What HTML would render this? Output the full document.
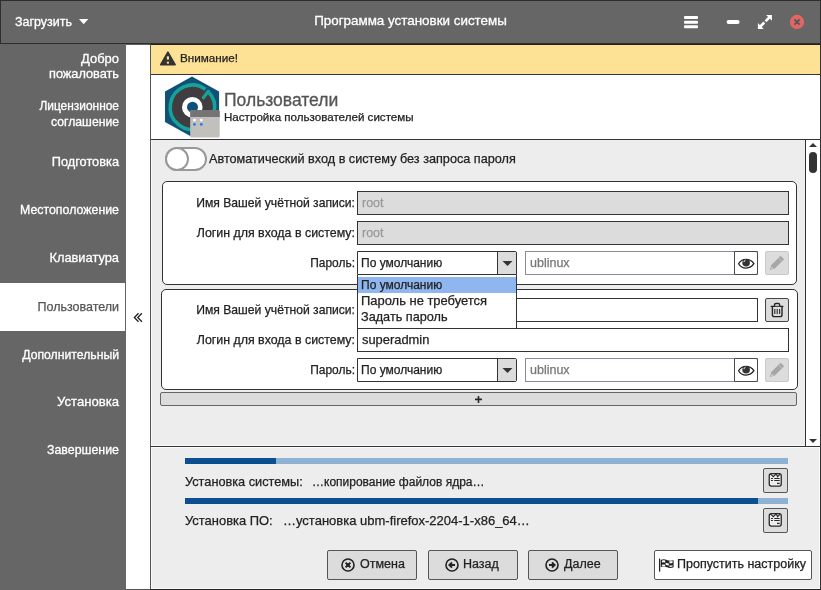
<!DOCTYPE html>
<html><head><meta charset="utf-8">
<style>
*{box-sizing:border-box;margin:0;padding:0}
html,body{width:821px;height:590px;overflow:hidden;background:#ededed}
body{will-change:transform}
body{position:relative;font-family:"Liberation Sans",sans-serif;font-size:12.5px;color:#222}
.a{position:absolute}
.t{position:absolute;white-space:pre;line-height:14px;height:14px;-webkit-text-stroke:0.25px currentColor}
.r{text-align:right}
.w{color:#fff;-webkit-text-stroke:0.3px #fff}
#hdr{left:0;top:0;width:821px;height:44px;background:#666;border:1px solid #2e2e2e}
#side{left:0;top:44px;width:126px;height:546px;background:#666}
#sel{left:0;top:283px;width:125px;height:48px;background:#fff}
#strip{left:126px;top:45px;width:25px;height:545px;background:#fff;border-bottom:1px solid #555}
#content{left:150px;top:44px;width:671px;height:546px;background:#ededed;border-top:1px solid #222;border-left:1px solid #555;border-right:1px solid #333;border-bottom:1px solid #222}
#warn{left:151px;top:45px;width:669px;height:30px;background:#fde295;border-bottom:1px solid #333}
#head{left:151px;top:75px;width:669px;height:65px;background:#fff;border-bottom:1px solid #333}
#scroll{left:151px;top:140px;width:669px;height:307px;border-bottom:1px solid #333}
#scrollhl{left:151px;top:140px;width:654px;height:306px;border-left:1px solid #fafafa;border-bottom:1px solid #fafafa}
#sb{left:805px;top:140px;width:15px;height:306px;background:#fff;border-left:1px solid #333}
.frame{position:absolute;background:#fff;border:1px solid #333;border-radius:5px}
.entry{position:absolute;background:#fff;border:1px solid #333}
.dis{background:#dcdcdc}
.btn{position:absolute;background:#dcdcdc;border:1px solid #555;border-radius:2px}
.pb{position:absolute;height:6px;background:#8fb1d4}
.pbf{position:absolute;left:0;top:0;height:6px;background:#0b4f91}
</style></head><body>
<svg width="0" height="0" style="position:absolute">
<defs>
<symbol id="eye" viewBox="0 0 23 24"><path d="M3.6 12.7C6.8 6.9 15.2 6.9 18.9 12.7C15.2 18.5 6.8 18.5 3.6 12.7Z" fill="none" stroke="#222" stroke-width="1.3"/><circle cx="11.1" cy="11.7" r="3.8" fill="#333"/><path d="M8.9 11.2A2.4 2.4 0 0 1 10.5 9.1" stroke="#fff" stroke-width="0.9" fill="none"/></symbol>
<symbol id="pencil" viewBox="0 0 24 24"><g transform="translate(11.3 12.6) rotate(45)"><path d="M-2.5 -8.6H2.5V4.6L0 9.2L-2.5 4.6Z" fill="#a6a6a6"/><path d="M-2.6 -5.6H2.6" stroke="#d0d0d0" stroke-width="0.7"/><path d="M-1.2 5.2H1.2L0 7.6Z" fill="#d4d4d4"/></g></symbol>
<symbol id="trash" viewBox="0 0 24 24"><path d="M6.2 8.4H17.8" stroke="#222" stroke-width="1.4" stroke-linecap="round"/><path d="M9.5 8.2V6.9Q9.5 5.3 11.1 5.3H13.1Q14.7 5.3 14.7 6.9V8.2" fill="#bbb" stroke="#222" stroke-width="1.3"/><path d="M7.4 8.6V16.7Q7.4 18.6 9.3 18.6H15.1Q17 18.6 17 16.7V8.6" fill="none" stroke="#222" stroke-width="1.4"/><path d="M9.8 11V16.1M12.2 11V16.1M14.6 11V16.1" stroke="#333" stroke-width="1.15"/></symbol>
<symbol id="log" viewBox="0 0 25 25"><rect x="6.25" y="5.65" width="12" height="12.4" rx="2" fill="#eee" stroke="#2a2a2a" stroke-width="1.3"/><path d="M7.4 5.8L10.3 8.7L13.1 5.8L14.6 8.7L17.2 5.8" fill="none" stroke="#2a2a2a" stroke-width="1.2"/><path d="M8 10.5H9.9M11.2 10.5H16.7M8 12.5H9.9M11.2 12.5H16.7M14 15.3H16.7" stroke="#2a2a2a" stroke-width="1.15"/></symbol>
<symbol id="cancel" viewBox="0 0 16 16"><circle cx="8" cy="8" r="6" fill="none" stroke="#222" stroke-width="1.6"/><path d="M5.6 5.6L10.4 10.4M10.4 5.6L5.6 10.4" stroke="#222" stroke-width="1.9"/><rect x="6.4" y="6.4" width="3.2" height="3.2" fill="#222"/></symbol>
<symbol id="back" viewBox="0 0 16 16"><circle cx="8" cy="8" r="6" fill="none" stroke="#222" stroke-width="1.6"/><path d="M11 8H6M8 5.3L5.3 8L8 10.7" fill="none" stroke="#222" stroke-width="1.8"/></symbol>
<symbol id="fwd" viewBox="0 0 16 16"><circle cx="8" cy="8" r="6" fill="none" stroke="#222" stroke-width="1.6"/><path d="M5 8H10M8 5.3L10.7 8L8 10.7" fill="none" stroke="#222" stroke-width="1.8"/></symbol>
<symbol id="flag" viewBox="0 0 16 16"><path d="M1.6 2.6V15.6" stroke="#222" stroke-width="1.3"/><path d="M2.8 4Q5.5 2.6 8.8 3.9T15.6 4.2V11.2Q12.4 12.6 9 11.2T2.8 11.1Z" fill="#222"/><path d="M4 4.6Q5.5 4 7.2 4.5V6.6Q5.5 6.1 4 6.6Z M11.4 5.1Q13 5.3 14.5 4.9V7.1Q13 7.4 11.4 7.2Z M7.6 6.8Q9.2 7.2 10.9 7.5V9.5Q9.2 9.2 7.6 8.8Z M4 8.7Q5.5 8.3 7.2 8.8V10.4Q5.5 10 4 10.3Z M11.4 9.4Q13 9.6 14.5 9.2V10.6Q13 11.1 11.4 10.8Z" fill="#fff"/></symbol>
</defs></svg>
<div id="hdr" class="a"></div>
<div class="t w" style="left:15px;top:15px">Загрузить</div>
<svg class="a" style="left:79px;top:19px" width="10" height="6"><path d="M0 0H9.3L4.65 5.2Z" fill="#fff"/></svg>
<div class="t w" style="left:0;top:14px;width:821px;text-align:center;font-size:13.4px">Программа установки системы</div>
<!-- header icons -->
<svg class="a" style="left:683px;top:15px" width="16" height="14"><rect x="1" y="1" width="14" height="3" rx="1" fill="#fff"/><rect x="1" y="5.8" width="14" height="3" rx="1" fill="#fff"/><rect x="1" y="10.2" width="14" height="3" rx="1" fill="#fff"/></svg>
<svg class="a" style="left:726px;top:19px" width="14" height="6"><rect x="0.6" y="1" width="13" height="3.9" rx="1.9" fill="#fff"/></svg>
<svg class="a" style="left:754px;top:11px" width="22" height="22"><path d="M12.1 3.9H17.9V9.7Z M3.9 17.9V12.1L9.7 17.9Z" fill="#fff"/><path d="M15.6 6.2L11.5 10.3M10.3 11.5L6.2 15.6" stroke="#fff" stroke-width="2.6"/></svg>
<svg class="a" style="left:789px;top:14px" width="16" height="16"><circle cx="8" cy="8" r="7.2" fill="#e06666"/><path d="M5.4 5.4L10.6 10.6M10.6 5.4L5.4 10.6" stroke="#555" stroke-width="1.75"/></svg>

<div id="side" class="a"></div>
<div id="sel" class="a"></div>
<div class="t r w" style="left:0;width:119px;top:52px;font-size:12.97px">Добро</div>
<div class="t r w" style="left:0;width:119px;top:67px;font-size:12.74px">пожаловать</div>
<div class="t r w" style="left:0;width:119px;top:99px;font-size:11.93px">Лицензионное</div>
<div class="t r w" style="left:0;width:119px;top:115px;font-size:12.20px">соглашение</div>
<div class="t r w" style="left:0;width:119px;top:155px;font-size:12.79px">Подготовка</div>
<div class="t r w" style="left:0;width:119px;top:203px;font-size:12.36px">Местоположение</div>
<div class="t r w" style="left:0;width:119px;top:251px;font-size:12.85px">Клавиатура</div>
<div class="t r" style="left:0;width:119px;top:300px;font-size:12.49px;color:#555;-webkit-text-stroke:0.25px #555">Пользователи</div>
<div class="t r w" style="left:0;width:119px;top:348px;font-size:12.22px">Дополнительный</div>
<div class="t r w" style="left:0;width:119px;top:395px;font-size:13.12px">Установка</div>
<div class="t r w" style="left:0;width:119px;top:443px;font-size:12.38px">Завершение</div>

<div id="strip" class="a"></div>
<div class="a" style="left:126px;top:44px;width:24px;height:1px;background:#5e5e5e"></div>
<svg class="a" style="left:130px;top:310px" width="16" height="16"><path d="M8.5 3.3L4.4 7.5L8.5 11.7M11.9 3.3L7.8 7.5L11.9 11.7" fill="none" stroke="#222" stroke-width="1.3"/></svg>
<div id="content" class="a"></div>
<div id="warn" class="a"></div>
<svg class="a" style="left:160px;top:51px" width="17" height="15"><path d="M7.9 1.2L15.1 13.6H0.7Z" fill="#333" stroke="#333" stroke-width="1.6" stroke-linejoin="round"/><rect x="6.85" y="5.3" width="2.1" height="3.3" fill="#fde295"/><rect x="6.85" y="10.7" width="2.1" height="1.9" fill="#fde295"/></svg>
<div class="t" style="left:180px;top:51px;font-size:11.7px">Внимание!</div>
<div id="head" class="a"></div>
<!-- app icon -->
<svg class="a" style="left:160px;top:70px" width="62" height="70" viewBox="0 0 62 70">
  <path d="M32 6.5L59.1 21.6V52L32 67L5 52V21.6Z" fill="#0f5179"/>
  <circle cx="32.3" cy="37.2" r="20.6" fill="#403c3f"/>
  <path d="M48 21.5A22.2 22.2 0 1 1 45.4 19.3" fill="none" stroke="#18a197" stroke-width="3.6"/>
  <path d="M48.3 21.2L43.4 27.8" fill="none" stroke="#18a197" stroke-width="3.2" stroke-linecap="round"/>
  <circle cx="32.3" cy="37.2" r="10.3" fill="#fff"/>
  <circle cx="32.5" cy="37.2" r="5.5" fill="#0f5179"/>
  <rect x="30.2" y="40" width="29.5" height="27.5" rx="1.5" fill="#c2c0bd"/>
  <path d="M31.7 40H58.2A1.5 1.5 0 0 1 59.7 41.5V46.9H30.2V41.5A1.5 1.5 0 0 1 31.7 40Z" fill="#747376"/>
  <circle cx="34.5" cy="50.1" r="1.35" fill="#fff"/><circle cx="41.3" cy="50.1" r="1.35" fill="#fff"/>
  <circle cx="34.5" cy="54.4" r="1.45" fill="#2e7de3"/><circle cx="41.3" cy="54.4" r="1.45" fill="#2e7de3"/>
</svg>
<div class="t" style="left:224px;top:91px;font-size:17.5px;line-height:18px;height:18px;color:#555;-webkit-text-stroke:0.3px #555">Пользователи</div>
<div class="t" style="left:224px;top:110px;font-size:11.6px">Настройка пользователей системы</div>

<div id="scroll" class="a"></div><div id="scrollhl" class="a"></div>
<div id="sb" class="a"></div>
<svg class="a" style="left:808px;top:142px" width="10" height="6"><path d="M1 5H9L5 1Z" fill="#333"/></svg>
<div class="a" style="left:809px;top:152px;width:8px;height:21px;border-radius:4px;background:#333"></div>
<svg class="a" style="left:808px;top:438px" width="10" height="6"><path d="M1 1H9L5 5Z" fill="#333"/></svg>

<!-- toggle -->
<div class="a" style="left:165px;top:147px;width:42px;height:24px;border:2px solid #999;border-radius:12px;background:#fff"></div>
<div class="a" style="left:165px;top:147px;width:24px;height:24px;border:2px solid #999;border-radius:12px;background:#fff"></div>
<div class="t" style="left:209px;top:152px;font-size:12.67px">Автоматический вход в систему без запроса пароля</div>

<!-- frame 1 -->
<div class="frame" style="left:162px;top:181px;width:635px;height:104px"></div>
<div class="t r" style="left:150px;width:205px;top:196px;font-size:12.15px">Имя Вашей учётной записи:</div>
<div class="entry dis" style="left:357px;top:191px;width:432px;height:24px"></div>
<div class="t" style="left:362px;top:196px;color:#999">root</div>
<div class="t r" style="left:150px;width:205px;top:226px;font-size:12.4px">Логин для входа в систему:</div>
<div class="entry dis" style="left:357px;top:221px;width:432px;height:24px"></div>
<div class="t" style="left:362px;top:226px;color:#999">root</div>
<div class="t r" style="left:150px;width:205px;top:256px;font-size:11.95px">Пароль:</div>

<!-- frame 2 -->
<div class="frame" style="left:161px;top:289px;width:637px;height:101px"></div>
<div class="t r" style="left:150px;width:205px;top:303px;font-size:12.15px">Имя Вашей учётной записи:</div>
<div class="entry" style="left:357px;top:298px;width:401px;height:24px"></div>
<div class="btn" style="left:765px;top:298px;width:24px;height:24px;border-color:#444"></div>
<div class="t r" style="left:150px;width:205px;top:333px;font-size:12.4px">Логин для входа в систему:</div>
<div class="entry" style="left:357px;top:328px;width:432px;height:24px"></div>
<div class="t" style="left:362px;top:333px;font-size:12.9px">superadmin</div>
<div class="t r" style="left:150px;width:205px;top:363px;font-size:11.95px">Пароль:</div>

<div class="btn" style="left:160px;top:392px;width:637px;height:14px;border-color:#666;border-radius:2px"></div>
<svg class="a" style="left:473px;top:394px" width="11" height="11"><path d="M5.5 2V9M2 5.4H9" stroke="#2a2a2a" stroke-width="1.6"/></svg>

<!-- bottom -->
<div class="a" style="left:151px;top:447px;width:669px;height:142px;border-top:1px solid #fafafa;border-left:1px solid #fafafa;border-right:1px solid #fafafa;border-bottom:1px solid #fafafa"></div>
<div class="pb" style="left:185px;top:458px;width:603px"><div class="pbf" style="width:91px"></div></div>
<div class="t" style="left:185px;top:475px;font-size:12.74px">Установка системы:</div>
<div class="t" style="left:312px;top:475px;font-size:12px">…копирование файлов ядра…</div>
<div class="btn" style="left:763px;top:468px;width:25px;height:25px"></div>
<div class="pb" style="left:185px;top:498px;width:603px"><div class="pbf" style="width:573px"></div></div>
<div class="t" style="left:185px;top:514px;font-size:12.95px">Установка ПО:</div>
<div class="t" style="left:283px;top:514px;font-size:13px">…установка ubm-firefox-2204-1-x86_64…</div>
<div class="btn" style="left:763px;top:508px;width:25px;height:25px"></div>

<div class="btn" style="left:327px;top:550px;width:90px;height:30px"></div>
<div class="t" style="left:360px;top:557px">Отмена</div>
<div class="btn" style="left:428px;top:550px;width:90px;height:30px"></div>
<div class="t" style="left:463px;top:557px">Назад</div>
<div class="btn" style="left:528px;top:550px;width:90px;height:30px"></div>
<div class="t" style="left:564px;top:557px">Далее</div>
<div class="btn" style="left:654px;top:550px;width:158px;height:30px;background:#fff"></div>
<div class="t" style="left:677px;top:557px">Пропустить настройку</div>

<!-- password rows (combo+entry) frame1 -->
<div class="entry" style="left:357px;top:251px;width:160px;height:24px;border-radius:0 2px 0 0"></div>
<div class="a" style="left:497px;top:252px;width:19px;height:22px;background:#dcdcdc;border-left:1px solid #333;border-radius:0 1px 0 0"></div>
<svg class="a" style="left:502px;top:260px" width="11" height="7"><path d="M0.5 0.9H10.5L5.5 5.9Z" fill="#333"/></svg>
<div class="t" style="left:361px;top:256px;font-size:12px">По умолчанию</div>
<div class="entry" style="left:525px;top:251px;width:233px;height:24px;border-color:#8a8a9a"></div>
<div class="t" style="left:530px;top:256px;color:#777">ublinux</div>
<div class="a" style="left:734px;top:251px;width:24px;height:24px;border:1px solid #4a4a4a;border-radius:0 2px 2px 0;background:#fff"></div>
<div class="btn" style="left:765px;top:251px;width:24px;height:24px;background:#dcdcdc;border-color:#c8c8c8"></div>

<!-- frame2 password row -->
<div class="entry" style="left:357px;top:358px;width:160px;height:24px;border-radius:0 2px 2px 0"></div>
<div class="a" style="left:497px;top:359px;width:19px;height:22px;background:#dcdcdc;border-left:1px solid #333;border-radius:0 1px 1px 0"></div>
<svg class="a" style="left:502px;top:367px" width="11" height="7"><path d="M0.5 0.9H10.5L5.5 5.9Z" fill="#333"/></svg>
<div class="t" style="left:361px;top:363px;font-size:12px">По умолчанию</div>
<div class="entry" style="left:525px;top:358px;width:233px;height:24px;border-color:#8a8a9a"></div>
<div class="t" style="left:530px;top:363px;color:#777">ublinux</div>
<div class="a" style="left:734px;top:358px;width:24px;height:24px;border:1px solid #4a4a4a;border-radius:0 2px 2px 0;background:#fff"></div>
<div class="btn" style="left:765px;top:358px;width:24px;height:24px;background:#dcdcdc;border-color:#c8c8c8"></div>


<svg class="a" style="left:735px;top:251px" width="23" height="24"><use href="#eye"/></svg>
<svg class="a" style="left:765px;top:251px" width="24" height="24"><use href="#pencil"/></svg>
<svg class="a" style="left:735px;top:358px" width="23" height="24"><use href="#eye"/></svg>
<svg class="a" style="left:765px;top:358px" width="24" height="24"><use href="#pencil"/></svg>
<svg class="a" style="left:765px;top:298px" width="24" height="24"><use href="#trash"/></svg>
<svg class="a" style="left:763px;top:468px" width="25" height="25"><use href="#log"/></svg>
<svg class="a" style="left:763px;top:508px" width="25" height="25"><use href="#log"/></svg>
<svg class="a" style="left:340px;top:557px" width="16" height="16"><use href="#cancel"/></svg>
<svg class="a" style="left:444px;top:557px" width="16" height="16"><use href="#back"/></svg>
<svg class="a" style="left:544px;top:557px" width="16" height="16"><use href="#fwd"/></svg>
<svg class="a" style="left:658px;top:556px" width="16" height="16"><use href="#flag"/></svg>
<!-- popup -->
<div class="a" style="left:357px;top:275px;width:160px;height:54px;background:#fff;border:1px solid #333;border-top:none"></div>
<div class="a" style="left:358px;top:277px;width:158px;height:16px;background:#8fb6ee"></div>
<div class="t" style="left:361px;top:278px;font-size:12px">По умолчанию</div>
<div class="t" style="left:361px;top:294px;font-size:12.95px">Пароль не требуется</div>
<div class="t" style="left:361px;top:310px;font-size:12.7px">Задать пароль</div>
</body></html>
